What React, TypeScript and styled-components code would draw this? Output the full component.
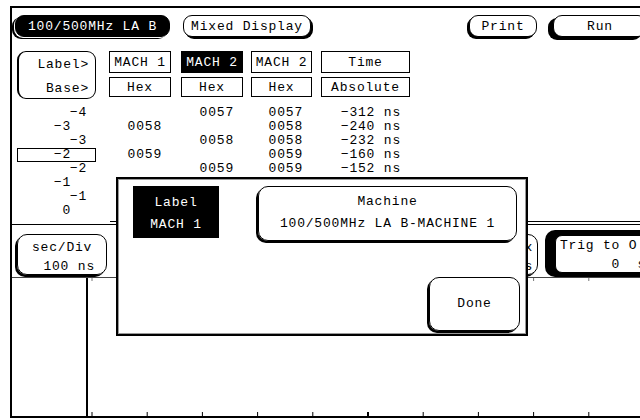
import styled, { createGlobalStyle } from "styled-components";

const GlobalStyle = createGlobalStyle`
  html, body {
    margin: 0;
    padding: 0;
    background: #fff;
  }
`;

type Shade = "left" | "right" | "heavy";

const shadows: Record<Shade, string> = {
  left: "-2px 2px 0 #000",
  right: "2px 2px 0 #000",
  heavy: "-5px 3px 0 #000",
};

interface Row {
  state: string;
  inner?: boolean;
  boxed?: boolean;
  m1?: string;
  m2?: string;
  hex?: string;
  time?: string;
}

const rows: Row[] = [
  { state: "−4", m2: "0057", hex: "0057", time: "−312 ns" },
  { state: "−3", inner: true, m1: "0058", hex: "0058", time: "−240 ns" },
  { state: "−3", m2: "0058", hex: "0058", time: "−232 ns" },
  { state: "−2", inner: true, boxed: true, m1: "0059", hex: "0059", time: "−160 ns" },
  { state: "−2", m2: "0059", hex: "0059", time: "−152 ns" },
  { state: "−1", inner: true },
  { state: "−1" },
  { state: "0", inner: true },
];

const TICKS = Array.from({ length: 10 }, (_, i) => 4 + i * 55.2);

const Screen = styled.div`
  position: relative;
  width: 640px;
  height: 420px;
  padding: 6px 0 0 10px;
  box-sizing: border-box;
  overflow: hidden;
  background: #fff;
  color: #000;
  font-family: "Liberation Mono", "DejaVu Sans Mono", monospace;
  font-size: 13px;
  letter-spacing: 0.8px;
`;

const Frame = styled.div`
  display: flex;
  flex-direction: column;
  width: 630px;
  height: 412px;
  box-sizing: border-box;
  border-top: 2px solid #000;
  border-left: 2px solid #000;
  border-bottom: 2px solid #000;
`;

const TopBar = styled.div`
  display: flex;
  flex-shrink: 0;
  height: 43px;
  padding: 7px 0 0 3px;
  box-sizing: border-box;
`;

const Key = styled.div<{ $w: number; $gap?: number; $shade?: Shade }>`
  flex-shrink: 0;
  width: ${(p) => p.$w}px;
  height: 22px;
  margin-left: ${(p) => p.$gap ?? 0}px;
  box-sizing: border-box;
  display: flex;
  align-items: center;
  justify-content: center;
  border: 1px solid #000;
  border-radius: 9px;
  background: #fff;
  box-shadow: ${(p) => shadows[p.$shade ?? "left"]};
  white-space: pre;
`;

const DarkKey = styled(Key)`
  background: #000;
  color: #fff;
  box-shadow: -1px 1px 0 #fff, -3px 2px 0 #000;
`;

const Listing = styled.div`
  display: flex;
  flex-shrink: 0;
  height: 167px;
  padding-left: 5px;
`;

const Column = styled.div<{ $w: number; $gap?: number }>`
  display: flex;
  flex-direction: column;
  flex-shrink: 0;
  width: ${(p) => p.$w}px;
  margin-left: ${(p) => p.$gap ?? 0}px;
`;

const LabelKey = styled.div`
  height: 48px;
  box-sizing: border-box;
  padding: 1px 6px 0 0;
  border: 1px solid #000;
  border-left-width: 2px;
  border-radius: 9px;
  line-height: 24px;
  text-align: right;
  margin-bottom: 7px;
`;

const HeadCell = styled.div<{ $on?: boolean }>`
  height: 22px;
  box-sizing: border-box;
  display: flex;
  align-items: center;
  justify-content: center;
  border: 1px solid #000;
  background: ${(p) => (p.$on ? "#000" : "#fff")};
  color: ${(p) => (p.$on ? "#fff" : "#000")};
  margin-bottom: 4px;
  white-space: pre;
`;

const BaseCell = styled(HeadCell)`
  height: 20px;
  margin-bottom: 9px;
`;

const DataCell = styled.div`
  height: 14px;
  line-height: 14px;
  padding-right: 9px;
  text-align: right;
  white-space: pre;
`;

const StateCell = styled.div<{ $inner?: boolean; $boxed?: boolean }>`
  height: 14px;
  line-height: 12px;
  box-sizing: border-box;
  padding-right: ${(p) => (p.$inner ? 24 : 8)}px;
  text-align: right;
  border: 1px solid ${(p) => (p.$boxed ? "#000" : "transparent")};
`;

const Rule = styled.div`
  flex-shrink: 0;
  height: 1px;
  margin: 3px 0 0 98px;
  background: #000;
`;

const Controls = styled.div`
  display: flex;
  flex-shrink: 0;
  height: 53px;
  margin-top: 2px;
  padding: 9px 0 0 5px;
  box-sizing: border-box;
  border-top: 1px solid #000;
`;

const TallKey = styled.div<{ $w: number; $gap?: number }>`
  flex-shrink: 0;
  width: ${(p) => p.$w}px;
  height: 41px;
  margin-left: ${(p) => p.$gap ?? 0}px;
  box-sizing: border-box;
  padding-top: 3px;
  border: 1px solid #000;
  border-radius: 10px;
  box-shadow: -2px 2px 0 #000;
  line-height: 19px;
  white-space: pre;
`;

const KeyLine = styled.div<{ $align?: "left" | "right"; $pad?: number }>`
  text-align: ${(p) => p.$align ?? "left"};
  padding: 0 ${(p) => (p.$align === "right" ? p.$pad ?? 0 : 0)}px 0
    ${(p) => (p.$align === "right" ? 0 : p.$pad ?? 0)}px;
`;

const ActiveKey = styled.div<{ $gap?: number }>`
  flex-shrink: 0;
  width: 110px;
  height: 47px;
  margin: -4px 0 0 ${(p) => p.$gap ?? 0}px;
  padding: 5px 0 4px 10px;
  box-sizing: border-box;
  border-radius: 10px;
  background: #000;
`;

const ActiveFace = styled.div`
  height: 100%;
  box-sizing: border-box;
  padding: 0 0 0 4px;
  border: 1px solid #000;
  border-radius: 7px;
  background: #fff;
  line-height: 19px;
  white-space: pre;
  overflow: hidden;
`;

const Graph = styled.div`
  display: flex;
  flex: 1;
  border-top: 1px solid #444;
`;

const GraphLabels = styled.div`
  width: 74px;
  flex-shrink: 0;
  border-right: 2px solid #000;
`;

const GraphField = styled.div`
  display: flex;
  flex: 1;
  flex-direction: column;
  justify-content: space-between;
`;

const Dialog = styled.div`
  position: absolute;
  left: 116px;
  top: 177px;
  width: 412px;
  height: 159px;
  box-sizing: border-box;
  display: flex;
  flex-direction: column;
  padding: 7px 6px 0 15px;
  border: 2px solid #000;
  background: #fff;
  box-shadow: inset 0 0 0 1px #999;
`;

const DialogRow = styled.div`
  display: flex;
  align-items: flex-start;
`;

const FieldTag = styled.div`
  width: 86px;
  height: 52px;
  box-sizing: border-box;
  padding-top: 6px;
  background: #000;
  color: #fff;
  line-height: 22px;
  text-align: center;
  white-space: pre;
`;

const FieldKey = styled.div<{ $w: number; $h: number; $gap?: number }>`
  flex-shrink: 0;
  width: ${(p) => p.$w}px;
  height: ${(p) => p.$h}px;
  margin-left: ${(p) => p.$gap ?? 0}px;
  box-sizing: border-box;
  padding-top: 4px;
  border: 1px solid #000;
  border-radius: 10px;
  box-shadow: -2px 2px 0 #000;
  line-height: 22px;
  text-align: center;
  white-space: pre;
`;

const DoneKey = styled(FieldKey)`
  align-self: flex-end;
  margin-top: 36px;
  padding-top: 0;
  display: flex;
  align-items: center;
  justify-content: center;
`;

const Ticks = ({ h, color }: { h: number; color: string }) => (
  <svg width="552" height={h} viewBox={`0 0 552 ${h}`} style={{ display: "block" }}>
    {TICKS.map((x, i) => (
      <line key={i} x1={x} x2={x} y1={0} y2={h} stroke={color} strokeWidth={i === 5 ? 2 : 1} />
    ))}
  </svg>
);

export default function App() {
  return (
    <Screen>
      <GlobalStyle />
      <Frame>
        <TopBar>
          <DarkKey $w={155}>100/500MHz LA B</DarkKey>
          <Key $w={128} $gap={13} $shade="right">
            Mixed Display
          </Key>
          <Key $w={68} $gap={158}>
            Print
          </Key>
          <Key $w={94} $gap={16} $shade="heavy">
            Run
          </Key>
        </TopBar>

        <Listing>
          <Column $w={79}>
            <LabelKey>
              <div>Label&gt;</div>
              <div>Base&gt;</div>
            </LabelKey>
            {rows.map((r, i) => (
              <StateCell key={i} $inner={r.inner} $boxed={r.boxed}>
                {r.state}
              </StateCell>
            ))}
          </Column>
          <Column $w={62} $gap={13}>
            <HeadCell>MACH 1</HeadCell>
            <BaseCell>Hex</BaseCell>
            {rows.map((r, i) => (
              <DataCell key={i}>{r.m1 ?? ""}</DataCell>
            ))}
          </Column>
          <Column $w={62} $gap={10}>
            <HeadCell $on>MACH 2</HeadCell>
            <BaseCell>Hex</BaseCell>
            {rows.map((r, i) => (
              <DataCell key={i}>{r.m2 ?? ""}</DataCell>
            ))}
          </Column>
          <Column $w={61} $gap={8}>
            <HeadCell>MACH 2</HeadCell>
            <BaseCell>Hex</BaseCell>
            {rows.map((r, i) => (
              <DataCell key={i}>{r.hex ?? ""}</DataCell>
            ))}
          </Column>
          <Column $w={89} $gap={9}>
            <HeadCell>Time</HeadCell>
            <BaseCell>Absolute</BaseCell>
            {rows.map((r, i) => (
              <DataCell key={i}>{r.time ?? ""}</DataCell>
            ))}
          </Column>
        </Listing>

        <Rule />

        <Controls>
          <TallKey $w={90}>
            <KeyLine $pad={14}>sec/Div</KeyLine>
            <KeyLine $align="right" $pad={11}>
              100 ns
            </KeyLine>
          </TallKey>
          <TallKey $w={118} $gap={313}>
            <KeyLine $align="right" $pad={4}>
              Max
            </KeyLine>
            <KeyLine $align="right" $pad={4}>
              0 s
            </KeyLine>
          </TallKey>
          <ActiveKey $gap={7}>
            <ActiveFace>
              <div>Trig to O</div>
              <div>{"      0  s"}</div>
            </ActiveFace>
          </ActiveKey>
        </Controls>

        <Graph>
          <GraphLabels />
          <GraphField>
            <Ticks h={3} color="#777" />
            <Ticks h={4} color="#000" />
          </GraphField>
        </Graph>
      </Frame>

      <Dialog>
        <DialogRow>
          <FieldTag>{"Label\nMACH 1"}</FieldTag>
          <FieldKey $w={259} $h={55} $gap={39}>
            {"Machine\n100/500MHz LA B-MACHINE 1"}
          </FieldKey>
        </DialogRow>
        <DoneKey $w={91} $h={54}>
          Done
        </DoneKey>
      </Dialog>
    </Screen>
  );
}
